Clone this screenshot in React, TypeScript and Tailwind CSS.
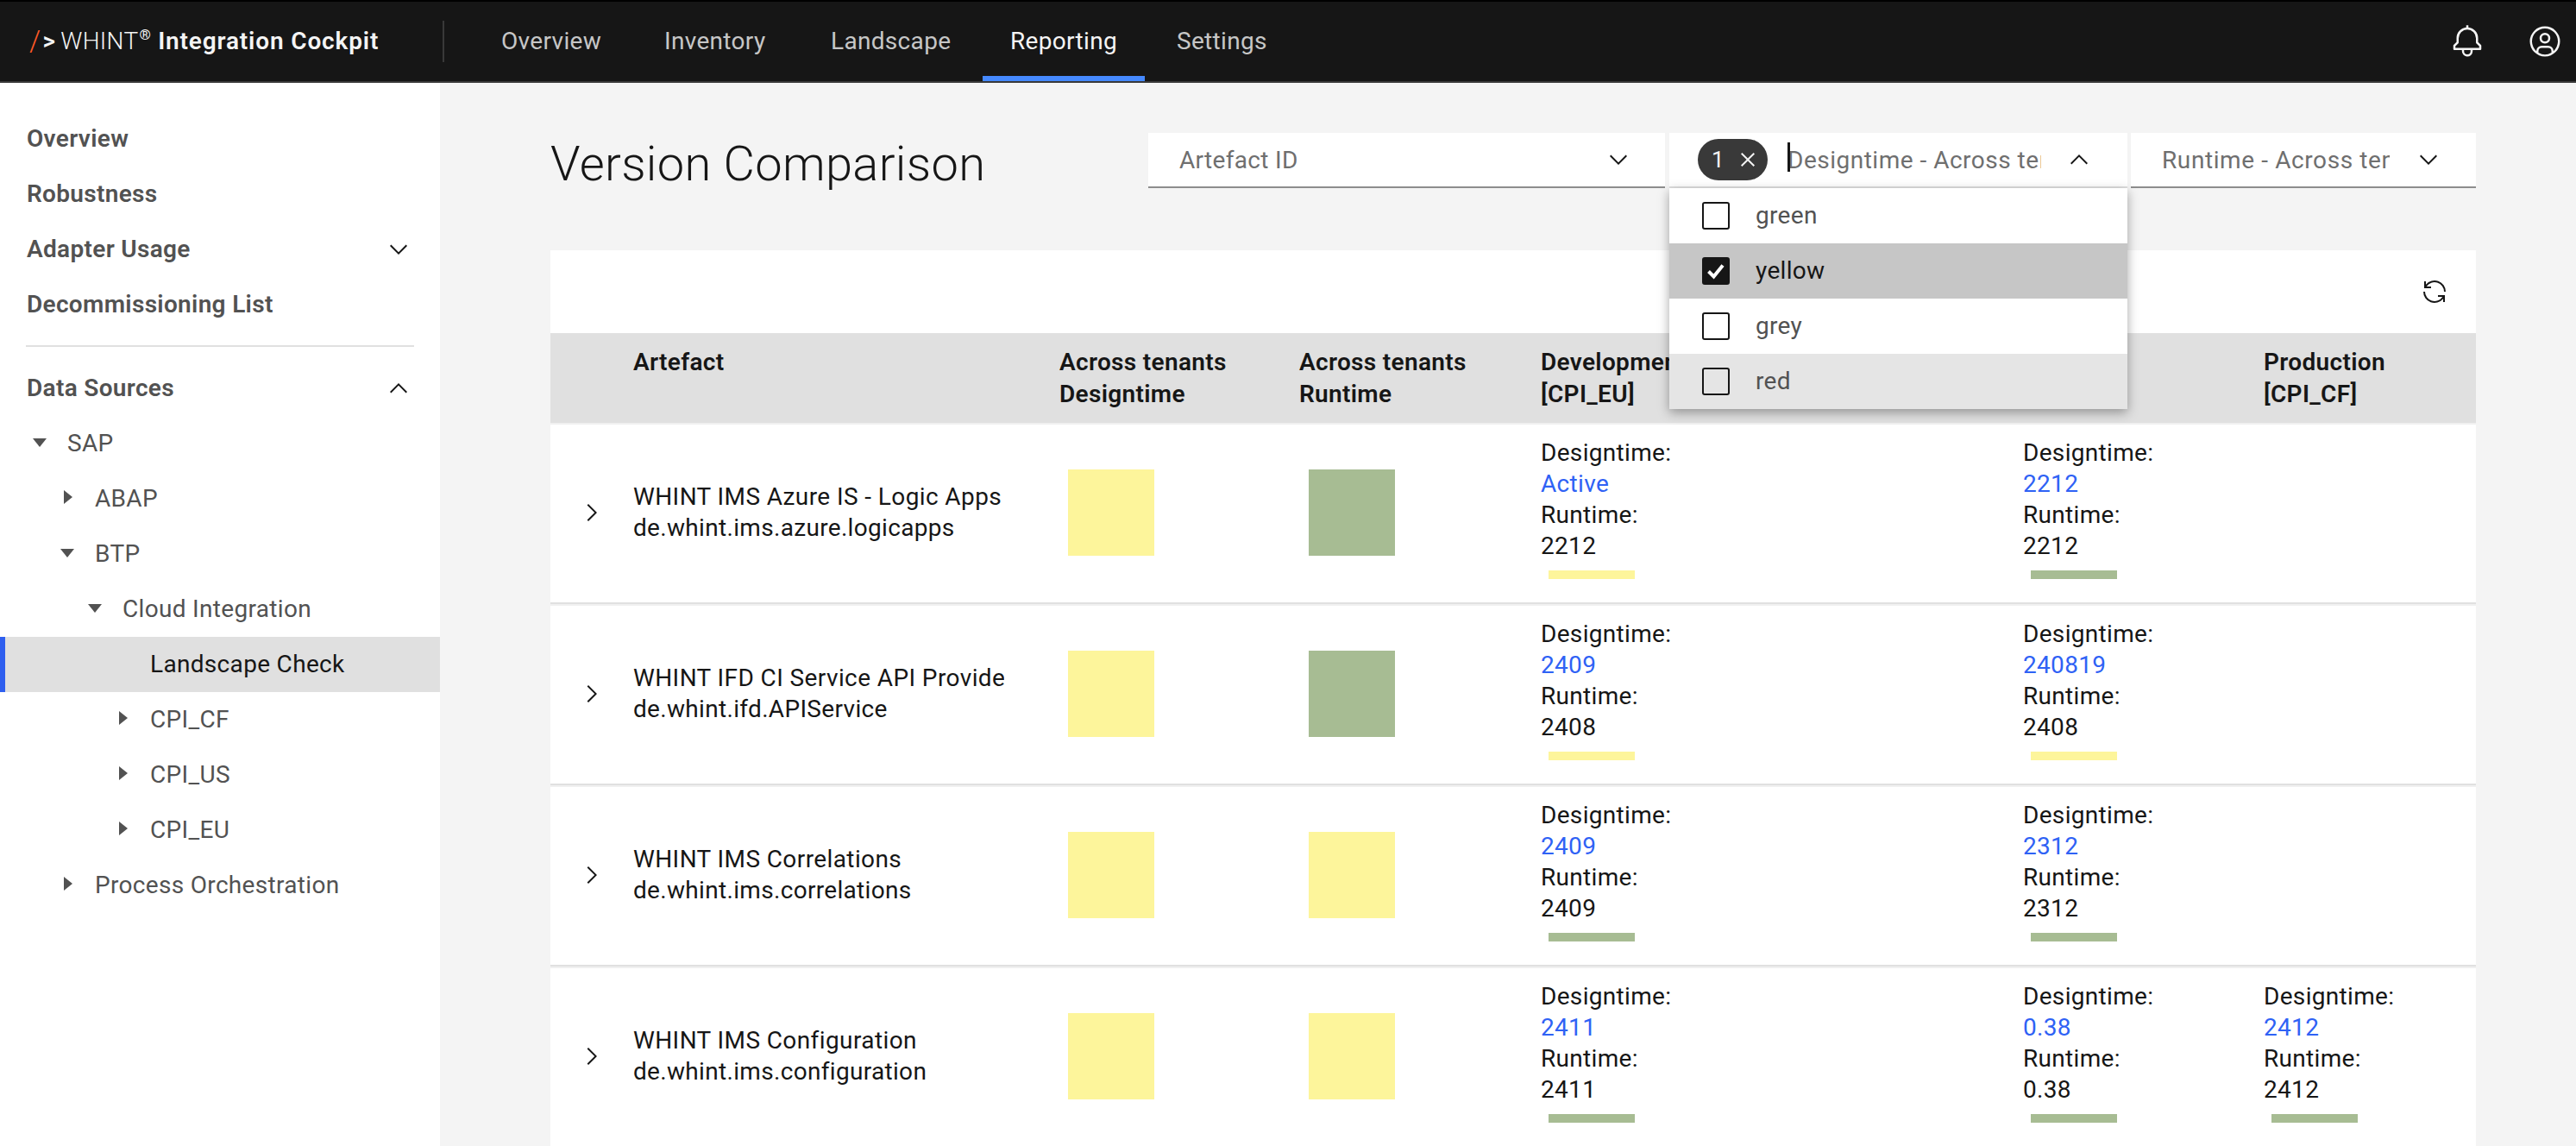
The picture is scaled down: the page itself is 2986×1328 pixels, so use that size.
import React from "react";

const Icon = ({ d, size = 32, className = "" }: { d: string | string[]; size?: number; className?: string }) => (
  <svg width={size} height={size} viewBox="0 0 32 32" fill="currentColor" className={"shrink-0 " + className}>
    {(Array.isArray(d) ? d : [d]).map((p, i) => (
      <path key={i} d={p} />
    ))}
  </svg>
);

const CHEV_DOWN = "M16 22L6 12 7.4 10.6 16 19.2 24.6 10.6 26 12z";
const CHEV_UP = "M16 10L26 20 24.6 21.4 16 12.8 7.4 21.4 6 20z";
const CHEV_RIGHT = "M22 16L12 26 10.6 24.6 19.2 16 10.6 7.4 12 6z";
const CARET_DOWN = "M24 12L16 22 8 12z";
const CARET_RIGHT = "M12 8L22 16 12 24z";
const CLOSE = "M17.4141 16L24 9.4141 22.5859 8 16 14.5859 9.4143 8 8 9.4141 14.5859 16 8 22.5859 9.4143 24 16 17.4141 22.5859 24 24 22.5859 17.4141 16z";
const BELL = "M28.7071,19.293,26,16.5859V13a10.0136,10.0136,0,0,0-9-9.9492V1H15V3.0508A10.0136,10.0136,0,0,0,6,13v3.5859L3.2929,19.293A1,1,0,0,0,3,20v3a1,1,0,0,0,1,1h7v.7768a5.152,5.152,0,0,0,4.5,5.1987A5.0057,5.0057,0,0,0,21,25V24h7a1,1,0,0,0,1-1V20A1,1,0,0,0,28.7071,19.293ZM19,25a3,3,0,0,1-6,0V24h6Zm8-3H5V20.4141L7.707,17.707A1,1,0,0,0,8,17V13a8,8,0,0,1,16,0v4a1,1,0,0,0,.293.707L27,20.4141Z";
const USER = [
  "M16,8a5,5,0,1,0,5,5A5,5,0,0,0,16,8Zm0,8a3,3,0,1,1,3-3A3.0034,3.0034,0,0,1,16,16Z",
  "M16,2A14,14,0,1,0,30,16,14.0158,14.0158,0,0,0,16,2ZM10,26.3765V25a3.0033,3.0033,0,0,1,3-3h6a3.0033,3.0033,0,0,1,3,3v1.3765a11.8989,11.8989,0,0,1-12,0Zm13.9925-1.4507A5.0016,5.0016,0,0,0,19,20H13a5.0016,5.0016,0,0,0-4.9925,4.9258,12,12,0,1,1,15.985,0Z",
];
const RENEW = [
  "M12,10H6.78A11,11,0,0,1,27,16h2A13,13,0,0,0,6,7.68V4H4v8h8Z",
  "M20,22h5.22A11,11,0,0,1,5,16H3a13,13,0,0,0,23,8.32V28h2V20H20Z",
];

const TopNav = () => (
  <header className="h-[96px] shrink-0 bg-[#161616] border-t-[2px] border-t-black border-b-[2px] border-b-[#393939] flex items-center">
    <div className="w-[515px] h-[48px] flex items-center pl-[34px] border-r-[2px] border-r-[#393939] text-[28px] text-[#f4f4f4] whitespace-nowrap shrink-0">
      <span className="text-[#ff5a26] text-[33px] font-light mr-[2px]">/</span>
      <span className="font-semibold mr-[6px]">&gt;</span>
      <span className="font-light">WHINT</span>
      <span className="text-[17px] relative -top-[7px] ml-[1px]">®</span>
      <span className="font-semibold ml-[8px] tracking-[0.85px]">Integration Cockpit</span>
    </div>
    <nav className="flex h-full ml-[34px] text-[28px] text-[#c6c6c6]">
      <a className="w-[189px] pl-[32px] flex items-center">Overview</a>
      <a className="w-[193px] pl-[32px] flex items-center">Inventory</a>
      <a className="w-[208px] pl-[32px] flex items-center">Landscape</a>
      <a className="w-[188px] mr-[5px] pl-[32px] flex items-center text-[#f4f4f4] border-b-[6px] border-b-[#4589ff] pt-[6px]">Reporting</a>
      <a className="w-[160px] pl-[32px] flex items-center">Settings</a>
    </nav>
    <div className="ml-auto flex items-center gap-[50px] pr-[16px] text-[#f4f4f4]">
      <Icon d={BELL} size={40} />
      <Icon d={USER} size={40} />
    </div>
  </header>
);

const SideLink = ({ label, icon }: { label: string; icon?: string }) => (
  <div className="h-[64px] flex items-center justify-between pl-[31px] pr-[32px] font-semibold text-[#525252]">
    <span>{label}</span>
    {icon && <Icon d={icon} className="text-[#161616]" />}
  </div>
);

const TreeRow = ({ label, level, open }: { label: string; level: number; open?: boolean }) => (
  <div className="h-[64px] flex items-center text-[#525252]" style={{ paddingLeft: 30 + level * 32 }}>
    <Icon d={open ? CARET_DOWN : CARET_RIGHT} className="text-[#525252] -mt-[4px]" />
    <span className="ml-[16px]">{label}</span>
  </div>
);

const Sidebar = () => (
  <aside className="w-[510px] shrink-0 bg-white pt-[33px] text-[28px] whitespace-nowrap">
    <SideLink label="Overview" />
    <SideLink label="Robustness" />
    <SideLink label="Adapter Usage" icon={CHEV_DOWN} />
    <SideLink label="Decommissioning List" />
    <div className="h-[2px] bg-[#e0e0e0] mx-[30px] mt-[15px] mb-[16px]" />
    <SideLink label="Data Sources" icon={CHEV_UP} />
    <TreeRow label="SAP" level={0} open />
    <TreeRow label="ABAP" level={1} />
    <TreeRow label="BTP" level={1} open />
    <TreeRow label="Cloud Integration" level={2} open />
    <div className="h-[64px] flex items-center bg-[#e0e0e0] border-l-[6px] border-l-[#2f5fef] pl-[168px] text-[#161616]">
      Landscape Check
    </div>
    <TreeRow label="CPI_CF" level={3} />
    <TreeRow label="CPI_US" level={3} />
    <TreeRow label="CPI_EU" level={3} />
    <TreeRow label="Process Orchestration" level={1} />
  </aside>
);

const Check = ({ on }: { on?: boolean }) => (
  <span className={"w-[32px] h-[32px] rounded-[3px] border-[2px] border-[#161616] flex items-center justify-center shrink-0 " + (on ? "bg-[#161616]" : "")}>
    {on && (
      <svg width="24" height="24" viewBox="0 0 24 24" fill="none" stroke="#fff" strokeWidth="4">
        <path d="M3.5 12.5L9.5 18.5L20 5.5" />
      </svg>
    )}
  </span>
);

const MenuItem = ({ label, on, bg }: { label: string; on?: boolean; bg: string }) => (
  <div className={"h-[64px] flex items-center pl-[38px] gap-[30px] " + bg + " " + (on ? "text-[#161616]" : "text-[#525252]")}>
    <Check on={on} />
    <span>{label}</span>
  </div>
);

const Filters = () => (
  <div className="flex items-start text-[28px] text-[#6f6f6f] whitespace-nowrap">
    <div className="w-[599px] h-[64px] bg-white border-b-[2px] border-b-[#8d8d8d] flex items-center pl-[36px] pr-[38px] justify-between">
      <span className="pt-[2px]">Artefact ID</span>
      <Icon d={CHEV_DOWN} className="text-[#161616]" />
    </div>
    <div className="relative w-[531px] h-[64px] ml-[5px] bg-white border-b-[2px] border-b-[#e0e0e0] flex items-center pl-[33px]">
      <span className="w-[81px] h-[48px] rounded-full bg-[#393939] text-[#f4f4f4] flex items-center pl-[16px] text-[26px] shrink-0">
        1<Icon d={CLOSE} className="ml-[11px]" />
      </span>
      <span className="relative ml-[23px] w-[294px] overflow-hidden pt-[2px] block tracking-[0.5px]">
        Designtime - Across tenants
        <span className="absolute left-0 top-[2px] w-[3px] h-[34px] bg-[#161616]" />
      </span>
      <Icon d={CHEV_UP} className="text-[#161616] ml-[28px]" />
      <div className="absolute left-0 top-[64px] w-[531px] bg-white shadow-[0_4px_12px_rgba(0,0,0,0.35)] z-10 tracking-[0.32px]">
        <MenuItem label="green" bg="bg-white" />
        <MenuItem label="yellow" on bg="bg-[#c6c6c6]" />
        <MenuItem label="grey" bg="bg-white" />
        <MenuItem label="red" bg="bg-[#e5e5e5]" />
      </div>
    </div>
    <div className="w-[400px] h-[64px] ml-[4px] bg-white border-b-[2px] border-b-[#8d8d8d] flex items-center pl-[36px]">
      <span className="w-[264px] overflow-hidden pt-[2px] tracking-[0.6px]">Runtime - Across tenants</span>
      <Icon d={CHEV_DOWN} className="text-[#161616] ml-[29px]" />
    </div>
  </div>
);

const Y = "bg-[#fdf59b]";
const G = "bg-[#a7bc93]";
const GRID = "grid grid-cols-[80px_494px_278px_280px_559px_279px_262px]";

type Env = { d: string; r: string; c: string } | null;
type Row = { name: string; id: string; a: string; b: string; envs: [Env, Env, Env] };

const rows: Row[] = [
  { name: "WHINT IMS Azure IS - Logic Apps", id: "de.whint.ims.azure.logicapps", a: Y, b: G, envs: [{ d: "Active", r: "2212", c: Y }, { d: "2212", r: "2212", c: G }, null] },
  { name: "WHINT IFD CI Service API Provider", id: "de.whint.ifd.APIService", a: Y, b: G, envs: [{ d: "2409", r: "2408", c: Y }, { d: "240819", r: "2408", c: Y }, null] },
  { name: "WHINT IMS Correlations", id: "de.whint.ims.correlations", a: Y, b: Y, envs: [{ d: "2409", r: "2409", c: G }, { d: "2312", r: "2312", c: G }, null] },
  { name: "WHINT IMS Configuration", id: "de.whint.ims.configuration", a: Y, b: Y, envs: [{ d: "2411", r: "2411", c: G }, { d: "0.38", r: "0.38", c: G }, { d: "2412", r: "2412", c: G }] },
];

const EnvCell = ({ env }: { env: Env }) => (
  <div className="pl-[16px] pt-[15px] leading-[36px]">
    {env && (
      <>
        <div>Designtime:</div>
        <div className="text-[#2f62f5]">{env.d}</div>
        <div>Runtime:</div>
        <div>{env.r}</div>
        <div className={"w-[100px] h-[10px] ml-[9px] mt-[10px] " + env.c} />
      </>
    )}
  </div>
);

const TableRow = ({ row }: { row: Row }) => (
  <div className={GRID + " relative h-[210px] bg-white border-b-[2px] border-b-[#f0f0f0]"}>
    <div className="flex items-center pl-[32px] pb-[4px] text-[#161616]">
      <Icon d={CHEV_RIGHT} />
    </div>
    <div className="flex flex-col justify-center pl-[16px] pb-[4px] leading-[36.5px] whitespace-nowrap tracking-[0.4px]">
      <div className="w-[430px] overflow-hidden">{row.name}</div>
      <div className="w-[430px] overflow-hidden tracking-[0.32px]">{row.id}</div>
    </div>
    <div className="flex items-center pl-[26px] pb-[4px]">
      <div className={"w-[100px] h-[100px] " + row.a} />
    </div>
    <div className="flex items-center pl-[27px] pb-[4px]">
      <div className={"w-[100px] h-[100px] " + row.b} />
    </div>
    <EnvCell env={row.envs[0]} />
    <EnvCell env={row.envs[1]} />
    <EnvCell env={row.envs[2]} />
    <div className="absolute left-0 right-0 bottom-0 h-[2px] bg-[#e0e0e0]" />
  </div>
);

const Table = () => (
  <section className="mt-[64px] text-[28px] text-[#161616]">
    <div className="h-[96px] bg-white flex items-center justify-end pr-[32px]">
      <Icon d={RENEW} />
    </div>
    <div className={GRID + " h-[106px] bg-[#e0e0e0] border-b-[2px] border-b-[#f0f0f0] font-semibold leading-[36.5px] pt-[16px]"}>
      <div />
      <div className="pl-[16px]">Artefact</div>
      <div className="pl-[16px]">Across tenants<br />Designtime</div>
      <div className="pl-[16px]">Across tenants<br />Runtime</div>
      <div className="pl-[16px]">Development<br />[CPI_EU]</div>
      <div className="pl-[16px]">Test<br />[CPI_US]</div>
      <div className="pl-[16px]">Production<br />[CPI_CF]</div>
    </div>
    {rows.map((r) => (
      <TableRow key={r.id} row={r} />
    ))}
  </section>
);

export default function App() {
  return (
    <div className="w-[2986px] h-[1328px] overflow-hidden flex flex-col bg-[#f4f4f4] [font-family:Roboto,sans-serif] tracking-[0.32px]">
      <TopNav />
      <div className="flex flex-1 min-h-0">
        <Sidebar />
        <main className="w-[2360px] pl-[128px] pt-[58px] overflow-hidden">
          <div className="flex items-start justify-between">
            <h1 className="text-[56px] font-light text-[#161616] leading-[72px] whitespace-nowrap">Version Comparison</h1>
            <Filters />
          </div>
          <Table />
        </main>
      </div>
    </div>
  );
}
